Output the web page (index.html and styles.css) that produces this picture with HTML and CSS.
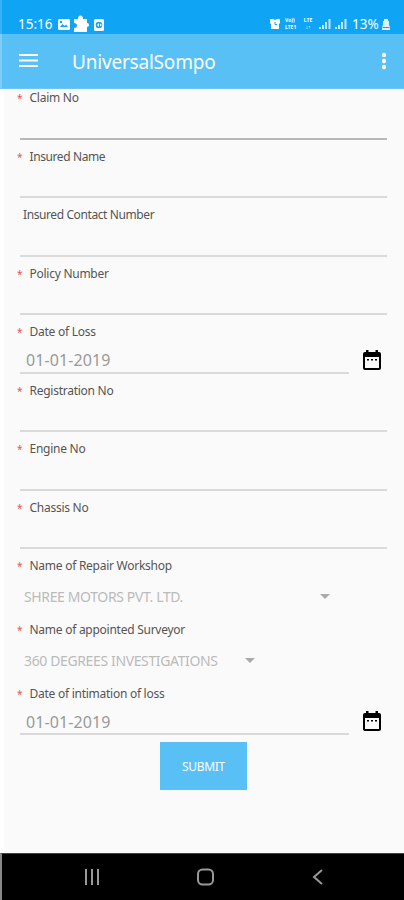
FILE: index.html
```html
<!DOCTYPE html>
<html lang="en">
<head>
<meta charset="UTF-8" />
<meta name="viewport" content="width=device-width, initial-scale=1" />
<title>UniversalSompo</title>
<link rel="stylesheet" href="styles.css">
</head>
<body>

<div class="statusbar">
  <span class="clock">15:16</span>
  <svg class="status-left" width="48" height="18" viewBox="0 0 48 18">
    <rect x="1" y="4" width="12" height="11" rx="1.500" fill="#fff"/>
    <path d="M3 12l2.500-3 2 2L9 9.500l2 2.500zM3 6h2v2H3z" fill="#10a4f5"/>
    <path d="M17 4h4q0-3.500 2.500-3.500T26 4h4v4q2 0 2 2t-2 2v5H17v-4q3 0 3-2.500T17 8z" fill="#fff"/>
    <rect x="37" y="4" width="10" height="12" rx="1.500" fill="#fff"/>
    <circle cx="42" cy="10" r="3.300" fill="#10a4f5"/>
    <path d="M42 8v4l-2-2zM43 8.500L45 10l-2 1.500z" fill="#fff"/>
  </svg>
  <svg class="alarm" width="12" height="12" viewBox="0 0 12 12">
    <path d="M1 1h3l2 1 2-1h3v4l-1 1v5H2V6L1 5z" fill="#fff"/>
    <path d="M6 4v2.500h2" stroke="#10a4f5" fill="none"/>
  </svg>
  <span class="volte"><span>Vo))</span><span>LTE1</span></span>
  <span class="volte net"><span>LTE</span><span>↓↑</span></span>
  <svg class="signal" width="28" height="12" viewBox="0 0 28 12" fill="#fff">
    <path d="M0 9h2v2H0zM3 7h2v4H3zM6 4h2v7H6zM9.500 1h2v10h-2zM16 9h2v2h-2zM19 7h2v4h-2zM22 4h2v7h-2zM25.500 1h2v10h-2z" opacity=".75"/>
  </svg>
  <span class="percent">13%</span>
  <svg class="battery" width="10" height="12" viewBox="0 0 10 12" fill="#fff">
    <path d="M3 1h4v2h1v4l1 2v3H1V9l1-2V3h1z" opacity=".85"/>
    <path d="M1.500 9.500h7" stroke="#10a4f5"/>
  </svg>
</div>

<header class="appbar">
  <svg width="20" height="16" viewBox="0 0 20 16" fill="#fff">
    <path d="M0 1h19v2H0zM0 6.500h19v2H0zM0 12h19v2H0z"/>
  </svg>
  <h1>UniversalSompo</h1>
  <svg width="6" height="18" viewBox="0 0 6 18" fill="#fff">
    <circle cx="3" cy="3" r="2.200"/><circle cx="3" cy="9" r="2.200"/><circle cx="3" cy="15" r="2.200"/>
  </svg>
</header>

<form class="claim-form">
  <div class="field first"><label><i>*</i>Claim No</label></div>
  <div class="field"><label class="tight"><i>*</i>Insured Name</label></div>
  <div class="field optional"><label class="tight">Insured Contact Number</label></div>
  <div class="field"><label><i>*</i>Policy Number</label></div>
  <div class="field date">
    <label><i>*</i>Date of Loss</label>
    <span class="value">01-01-2019</span>
    <svg class="calendar" width="20" height="22" viewBox="0 0 20 22">
      <path fill-rule="evenodd" d="M4 1h2.500v2h7V1H16v2h1q2 0 2 2v14q0 2-2 2H3q-2 0-2-2V5q0-2 2-2h1zM3 8v11h14V8z"/>
      <path d="M5 10h2v1.500H5zM9 10h2v1.500H9zM13 10h2v1.500h-2z"/>
    </svg>
  </div>
  <div class="field"><label><i>*</i>Registration No</label></div>
  <div class="field"><label><i>*</i>Engine No</label></div>
  <div class="field"><label><i>*</i>Chassis No</label></div>
  <div class="field select">
    <label><i>*</i>Name of Repair Workshop</label>
    <div class="choice workshop"><span>SHREE MOTORS PVT. LTD.</span><b class="arrow"></b></div>
  </div>
  <div class="field select">
    <label><i>*</i>Name of appointed Surveyor</label>
    <div class="choice surveyor"><span>360 DEGREES INVESTIGATIONS</span><b class="arrow"></b></div>
  </div>
  <div class="field date">
    <label><i>*</i>Date of intimation of loss</label>
    <span class="value">01-01-2019</span>
    <svg class="calendar" width="20" height="22" viewBox="0 0 20 22">
      <path fill-rule="evenodd" d="M4 1h2.500v2h7V1H16v2h1q2 0 2 2v14q0 2-2 2H3q-2 0-2-2V5q0-2 2-2h1zM3 8v11h14V8z"/>
      <path d="M5 10h2v1.500H5zM9 10h2v1.500H9zM13 10h2v1.500h-2z"/>
    </svg>
  </div>
  <button type="button" class="submit">SUBMIT</button>
</form>

<nav class="navbar">
  <svg width="16" height="18" viewBox="0 0 16 18" fill="none" stroke="#999" stroke-width="2">
    <path d="M2 1v16M8 1v16M14 1v16"/>
  </svg>
  <svg width="18" height="18" viewBox="0 0 18 18" fill="none" stroke="#999" stroke-width="2">
    <rect x="1" y="1.500" width="15" height="15" rx="4.500"/>
  </svg>
  <svg width="12" height="18" viewBox="0 0 12 18" fill="none" stroke="#999" stroke-width="2">
    <path d="M10 2L2 9l8 7"/>
  </svg>
</nav>

</body>
</html>
```
FILE: styles.css
```css
* {
  box-sizing: border-box;
}
body {
  margin: 0;
  height: 900px;
  display: flex;
  flex-direction: column;
  overflow: hidden;
  background: #fafafa;
  font-family: "Noto Sans", sans-serif;
}
svg {
  display: block;
  flex: none;
}
.statusbar {
  height: 34px;
  flex: none;
  display: flex;
  align-items: center;
  padding: 13px 13px 0 16px;
  background: #10a4f5;
  border-left: 2px solid #38b2f5;
  color: #fff;
  white-space: nowrap;
}
.clock {
  width: 39px;
  font-size: 13.5px;
}
.alarm {
  margin-left: auto;
  margin-right: 4px;
}
.volte {
  width: 15px;
  display: flex;
  flex-direction: column;
  font-size: 5px;
  line-height: 7px;
  font-weight: 700;
  margin-right: 2px;
}
.net {
  width: 12px;
  text-align: center;
  margin-right: 5px;
}
.signal {
  margin-right: 5px;
}
.percent {
  width: 29px;
  font-size: 13.5px;
}
.appbar {
  height: 55px;
  flex: none;
  display: flex;
  align-items: center;
  padding: 0 17px;
  background: #59c0f5;
  border-left: 2px solid #7dcdf7;
  border-bottom: 1px solid #70c4ef;
}
.appbar h1 {
  margin: 1px auto 0 33px;
  color: #fff;
  font-size: 19px;
  font-weight: 400;
  letter-spacing: -0.2px;
}
.claim-form {
  flex: 1;
  display: flex;
  flex-direction: column;
  border-left: 4px solid #fff;
  padding: 0 17px 0 16px;
}
.field {
  height: 58.55px;
  flex: none;
  padding-top: 9px;
  border-bottom: 2px solid #dadada;
}
.field.first {
  height: 50.5px;
  padding-top: 1px;
  border-color: #b8b8b8;
}
label {
  display: flex;
  height: 16px;
  line-height: 16px;
  margin-left: -3px;
  font-size: 12px;
  letter-spacing: -0.26px;
  color: #555;
  white-space: nowrap;
}
.tight {
  letter-spacing: -0.4px;
}
label i {
  width: 12.5px;
  font-size: 10px;
  color: #f05050;
  font-style: normal;
}
.optional label {
  margin-left: 3px;
}
.date {
  position: relative;
  width: 329px;
}
.value {
  display: block;
  margin: 8px 0 0 6px;
  line-height: 24px;
  font-size: 16px;
  letter-spacing: 0.1px;
  color: #999;
}
.calendar {
  position: absolute;
  right: -33px;
  bottom: 1px;
}
.select {
  height: 63.8px;
  border: 0;
}
.choice {
  display: flex;
  align-items: center;
  justify-content: space-between;
  height: 20px;
  margin: 12px 0 0 4px;
  font-size: 14px;
  letter-spacing: -0.37px;
  color: #bbb;
  white-space: nowrap;
}
.workshop {
  width: 306px;
}
.surveyor {
  width: 231px;
}
.arrow {
  border: 5px solid transparent;
  border-top-color: #aaa;
  border-bottom: 0;
}
.submit {
  width: 87px;
  height: 48px;
  margin: 7px 0 0 140px;
  padding: 0;
  border: 0;
  background: #59c0f5;
  color: #fff;
  font: 12px "Noto Sans", sans-serif;
  letter-spacing: -0.3px;
}
.navbar {
  height: 47px;
  flex: none;
  display: flex;
  align-items: center;
  justify-content: space-between;
  padding: 0 80px 0 82px;
  background: #000;
  border-left: 2px solid #888;
  border-top: 1px solid #444;
}
```
